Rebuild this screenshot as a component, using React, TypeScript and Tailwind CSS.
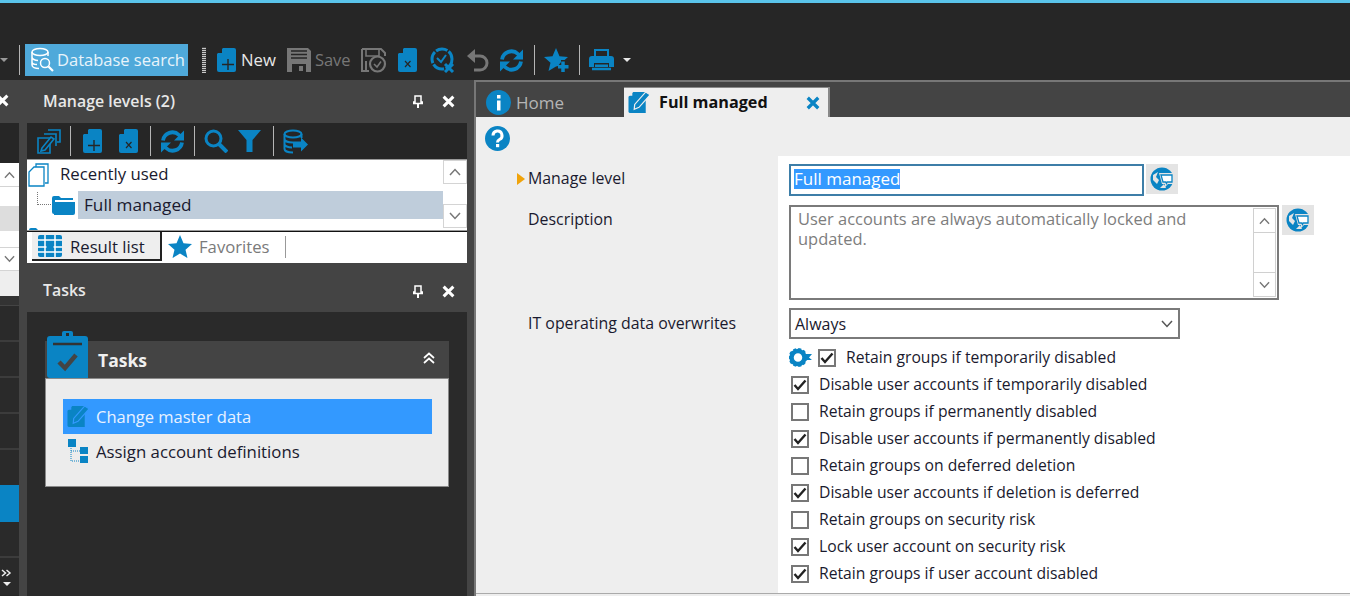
import React from "react";

const B = "#0a84c4";

function Ic({ w, h, vb, className, children }: { w: number; h: number; vb?: string; className?: string; children: React.ReactNode }) {
  return (
    <svg width={w} height={h} viewBox={vb ?? `0 0 ${w} ${h}`} className={`shrink-0 ${className ?? ""}`}>
      {children}
    </svg>
  );
}

function DocPlus({ x = false, className }: { x?: boolean; className?: string }) {
  return (
    <Ic w={19} h={24} className={className}>
      <path d="M6 0H17a2 2 0 0 1 2 2V22a2 2 0 0 1-2 2H2a2 2 0 0 1-2-2V6Z" fill={B} />
      <path d="M5 0V5H0Z" fill="#262626" />
      {x ? (
        <path d="M7 13L12.500 19M12.500 13L7 19" stroke="#262626" strokeWidth="1.200" />
      ) : (
        <path d="M11 11V22M5 16.500H17" stroke="#262626" strokeWidth="1.400" />
      )}
    </Ic>
  );
}

function Sync({ color = B }: { color?: string }) {
  return (
    <Ic w={25} h={25} vb="0 0 25 25">
      <path d="M3 11.500A9.500 9.500 0 0 1 19 6L21.500 8.500" fill="none" stroke={color} strokeWidth="3.800" />
      <path d="M24 1.500V11.500H14Z" fill={color} />
      <path d="M22 13.500A9.500 9.500 0 0 1 6 19L3.500 16.500" fill="none" stroke={color} strokeWidth="3.800" />
      <path d="M1 23.500V13.500H11Z" fill={color} />
    </Ic>
  );
}

function DbGlass({ className }: { className?: string }) {
  return (
    <Ic w={24} h={26} className={className}>
      <g fill="none" stroke="#fff" strokeWidth="1.500">
        <ellipse cx="10" cy="5" rx="8" ry="3.500" />
        <path d="M2 5V18C2 20 5 21.500 9 21.500M18 5V9M2 10C2 12 5 13.500 8 13.500M2 15C2 16.500 4 17.500 7 17.500" />
        <circle cx="15" cy="16" r="4.500" />
        <path d="M18.500 19.500L23 24" strokeWidth="2.200" />
      </g>
    </Ic>
  );
}

function Floppy() {
  return (
    <Ic w={24} h={24}>
      <path d="M0 0H21L24 3V24H0Z" fill="#777" />
      <path d="M4 3H20M4 6.500H20M4 10H20" stroke="#262626" strokeWidth="1.300" />
      <rect x="5" y="16" width="14" height="8" fill="#262626" />
      <rect x="12" y="18" width="4" height="5" fill="#777" />
    </Ic>
  );
}

function SaveClock() {
  return (
    <Ic w={26} h={26}>
      <path d="M1 2H20L24 6V9M1 2V24H8" fill="none" stroke="#777" strokeWidth="2" />
      <path d="M5 3V9H18V3" fill="none" stroke="#777" strokeWidth="1.600" />
      <path d="M5 14V23" stroke="#777" strokeWidth="2" />
      <circle cx="16.500" cy="17" r="7.500" fill="none" stroke="#777" strokeWidth="2.200" />
      <path d="M13 17L16 20L20 14.500" fill="none" stroke="#777" strokeWidth="1.600" />
    </Ic>
  );
}

function ClockX() {
  return (
    <Ic w={26} h={26}>
      <circle cx="12" cy="12" r="10" fill="none" stroke={B} strokeWidth="3" strokeDasharray="12 1.500" />
      <path d="M7 11L11 15L16 8" fill="none" stroke={B} strokeWidth="2" />
      <path d="M15 17L23 25M23 17L15 25" stroke={B} strokeWidth="3" />
    </Ic>
  );
}

function Undo() {
  return (
    <Ic w={23} h={24}>
      <path d="M5 8H14A7 7 0 0 1 14 22H8" fill="none" stroke="#777" strokeWidth="3" />
      <path d="M9 1V15L1 8Z" fill="#777" />
    </Ic>
  );
}

function Star({ plus = false }: { plus?: boolean }) {
  return (
    <Ic w={25} h={24}>
      <path d="M12 0L15.500 8.200L24 9L17.500 14.700L19.500 23L12 18.600L4.500 23L6.500 14.700L0 9L8.500 8.200Z" fill={B} />
      {plus && <rect x="12" y="12" width="13" height="12" fill="#262626" />}
      {plus && <path d="M12 12H17V14L14 18L12 18.600Z" fill={B} />}
      {plus && <path d="M19 13.500V24M14 18.700H24.500" stroke={B} strokeWidth="3.500" />}
    </Ic>
  );
}

function Printer() {
  return (
    <Ic w={25} h={24}>
      <path d="M6 9V2H19V9" fill="none" stroke={B} strokeWidth="2" />
      <path d="M3 8H22A3 3 0 0 1 25 11V19H20V15H5V19H0V11A3 3 0 0 1 3 8Z" fill={B} />
      <path d="M3 21H22" stroke={B} strokeWidth="2.500" />
      <rect x="6" y="16.500" width="13" height="2.500" fill={B} />
    </Ic>
  );
}

function EditCopy() {
  return (
    <Ic w={24} h={25}>
      <g fill="none" stroke={B} strokeWidth="1.600">
        <path d="M11 1H23V13H20M7 5H19V17" />
        <path d="M1 9H13V24H1Z" />
        <path d="M5 19L14 8L17 10L8 21L4 22Z" fill="#262626" />
      </g>
    </Ic>
  );
}

function Search() {
  return (
    <Ic w={24} h={24}>
      <circle cx="9.500" cy="9.500" r="7.500" fill="none" stroke={B} strokeWidth="3" />
      <path d="M15 15L23 23" stroke={B} strokeWidth="4" />
    </Ic>
  );
}

function Funnel() {
  return (
    <Ic w={23} h={22}>
      <path d="M0 0H23L14.500 10V22H8.500V10Z" fill={B} />
    </Ic>
  );
}

function DbExport() {
  return (
    <Ic w={25} h={25}>
      <g fill="none" stroke={B} strokeWidth="2">
        <ellipse cx="10" cy="5" rx="8.500" ry="3.500" />
        <path d="M1.500 5V20C1.500 22 5 23.500 10 23.500M18.500 5V9M1.500 10C1.500 12 5 13.500 10 13.500M1.500 15C1.500 17 5 18.500 9 18.500" />
      </g>
      <path d="M10 12.500H18V8.500L25 15.500L18 22.500V18.500H10Z" fill={B} />
    </Ic>
  );
}

function Pin() {
  return (
    <Ic w={10} h={13}>
      <path d="M2 1H8V7H10V8.500H0V7H2Z" fill="none" stroke="#fff" strokeWidth="1.500" />
      <path d="M5 8V13" stroke="#fff" strokeWidth="2" />
    </Ic>
  );
}

function XIcon({ color = "#fff", size = 13 }: { color?: string; size?: number }) {
  return (
    <Ic w={size} h={size} vb="0 0 12 12">
      <path d="M1.500 1.500L10.500 10.500M10.500 1.500L1.500 10.500" stroke={color} strokeWidth="2.800" />
    </Ic>
  );
}

function Chevron({ up = false, color = "#777", w = 12 }: { up?: boolean; color?: string; w?: number }) {
  return (
    <Ic w={w} h={8} vb="0 0 12 8">
      <path d={up ? "M1 7L6 1.500L11 7" : "M1 1L6 6.500L11 1"} fill="none" stroke={color} strokeWidth="1.500" />
    </Ic>
  );
}

function Globe() {
  return (
    <Ic w={24} h={24}>
      <circle cx="12" cy="12" r="11.500" fill={B} />
      <path d="M3 8L8 5L6 10L9 13L7 17L3 13ZM10 21L14 17L16 21Z" fill="#e4e4e4" />
      <path d="M9 6H24V17H18L15 20V17H12Z" fill="#e4e4e4" />
      <path d="M11 8H22V15H17L16.500 16.500L15.500 15H13Z" fill="#fff" stroke={B} strokeWidth="1.300" />
    </Ic>
  );
}

function GlobeBtn({ className }: { className?: string }) {
  return (
    <div className={`flex h-[30px] w-[32px] items-center justify-center bg-[#e4e4e4] ${className ?? ""}`}>
      <Globe />
    </div>
  );
}

function Folder({ className }: { className?: string }) {
  return (
    <Ic w={24} h={20} className={className}>
      <path d="M1 3A2 2 0 0 1 3 1H8L10 3H22V5H4V19H3A2 2 0 0 1 1 17Z" fill={B} />
      <path d="M3 7H24V18A2 2 0 0 1 22 20H3Z" fill={B} />
    </Ic>
  );
}

function EditDoc({ s = 23, bg = "#eeeeee" }: { s?: number; bg?: string }) {
  return (
    <Ic w={s} h={s} vb="0 0 23 24">
      <path d="M5 1H18V23H2A2 2 0 0 1 0 21V6Z" fill={B} />
      <path d="M4 1V5H0Z" fill={bg} />
      <path d="M6 19L6.500 14L18 1L22.500 4L11 17Z" fill={B} stroke={bg} strokeWidth="1.300" />
    </Ic>
  );
}

function Sep({ className }: { className?: string }) {
  return <div className={`h-[30px] w-px shrink-0 bg-[#b5b5b5] ${className ?? ""}`} />;
}

function MainPanelHeader({ title, h, extra }: { title: string; h: string; extra?: string }) {
  return (
    <div className={`flex items-center justify-between bg-[#444444] pr-[12px] pl-[16px] text-[#e8e8e8] ${h} ${extra ?? ""}`}>
      <span className="text-[15.900px] font-semibold">{title}</span>
      <div className="flex items-center gap-[19px]">
        <Pin />
        <XIcon />
      </div>
    </div>
  );
}

function ScrollBtn({ up, h }: { up: boolean; h: string }) {
  return (
    <div className={`flex items-center justify-center border border-[#d4d4d4] bg-white ${h}`}>
      <Chevron up={up} color="#777" />
    </div>
  );
}

function Check({ on }: { on: boolean }) {
  return (
    <div className="flex h-[18px] w-[18px] shrink-0 items-center justify-center border-2 border-[#777777] bg-white">
      {on && (
        <Ic w={14} h={12}>
          <path d="M1.500 6L5 10L12.500 1.500" fill="none" stroke="#222" strokeWidth="2.400" />
        </Ic>
      )}
    </div>
  );
}

const checks: [string, boolean][] = [
  ["Disable user accounts if temporarily disabled", true],
  ["Retain groups if permanently disabled", false],
  ["Disable user accounts if permanently disabled", true],
  ["Retain groups on deferred deletion", false],
  ["Disable user accounts if deletion is deferred", true],
  ["Retain groups on security risk", false],
  ["Lock user account on security risk", true],
  ["Retain groups if user account disabled", true],
];

function Toolbar() {
  return (
    <div className="flex h-[32px] items-center">
      <div className="h-0 w-0 border-x-[4px] border-t-[4px] border-x-transparent border-t-[#999]" />
      <Sep className="ml-[11px]" />
      <div className="ml-[5px] flex h-[32px] w-[163px] items-center bg-[#4fa9da] pl-[5px] text-[#e8f4fb]">
        <DbGlass />
        <span className="ml-[3px] text-[16.500px]">Database search</span>
      </div>
      <div className="ml-[14px] h-[26px] w-[4px] shrink-0 bg-[repeating-linear-gradient(0deg,#c8c8c8_0,#c8c8c8_1px,#444_1px,#444_2px)]" />
      <DocPlus className="ml-[11px]" />
      <span className="ml-[5px] text-[16.700px] text-[#e8e8e8]">New</span>
      <div className="ml-[11px]"><Floppy /></div>
      <span className="ml-[4px] text-[16.500px] text-[#777]">Save</span>
      <div className="ml-[10px]"><SaveClock /></div>
      <DocPlus x className="ml-[11px]" />
      <div className="ml-[13px]"><ClockX /></div>
      <div className="ml-[10px]"><Undo /></div>
      <div className="ml-[10px]"><Sync /></div>
      <Sep className="ml-[10px]" />
      <div className="ml-[9px]"><Star plus /></div>
      <Sep className="ml-[10px]" />
      <div className="ml-[9px]"><Printer /></div>
      <div className="ml-[9px] h-0 w-0 border-x-[4px] border-t-[4px] border-x-transparent border-t-[#e8e8e8]" />
    </div>
  );
}

function LeftStrip() {
  return (
    <div className="flex w-[19px] shrink-0 flex-col">
      <div className="flex h-[43px] items-center bg-[#444444] pb-[3px]">
        <div className="-ml-[4px]"><XIcon /></div>
      </div>
      <div className="h-[40px] bg-[#262626]" />
      <div className="flex h-[24px] items-center justify-center border-b border-[#d4d4d4] bg-white"><Chevron up w={11} /></div>
      <div className="h-[19px] bg-white" />
      <div className="h-[25px] bg-[#dddddd]" />
      <div className="h-[16px] bg-white" />
      <div className="flex h-[24px] items-center justify-center border-y border-[#d4d4d4] bg-white"><Chevron w={11} /></div>
      <div className="h-[25px] bg-[#eeeeee]" />
      <div className="h-[9px] bg-[#333333]" />
      <div className="h-[1px] bg-[#444444]" />
      <div className="h-[36px] border-b-2 border-[#3c3c3c] bg-[#2a2a2a]" />
      {[0, 1, 2].map((i) => (
        <div key={i} className="h-[36px] border-b-2 border-[#3c3c3c] bg-[#2a2a2a]" />
      ))}
      <div className="h-[35px] bg-[#2a2a2a]" />
      <div className="h-[37px] bg-[#0a84c4]" />
      <div className="h-[36px] border-b-2 border-[#3c3c3c] bg-[#2a2a2a]" />
      <div className="flex h-[37px] flex-col items-start justify-center gap-[5px] bg-[#2a2a2a] pt-[1px] pl-[1px]">
        <Ic w={11} h={8}>
          <path d="M1 1L4.500 4L1 7M5.500 1L9 4L5.500 7" fill="none" stroke="#eee" strokeWidth="1.500" />
        </Ic>
        <div className="ml-[2px] h-0 w-0 border-x-[4px] border-t-[4px] border-x-transparent border-t-[#eee]" />
      </div>
    </div>
  );
}

function ManagePanel() {
  return (
    <div className="flex h-[516px] w-[440px] shrink-0 flex-col bg-[#2a2a2a]">
      <MainPanelHeader title="Manage levels (2)" h="h-[43px]" />
      <div className="flex h-[36px] items-center bg-[#262626] pl-[10px]">
        <EditCopy />
        <Sep className="ml-[9px]" />
        <DocPlus className="ml-[12px]" />
        <DocPlus x className="ml-[17px]" />
        <Sep className="ml-[12px]" />
        <div className="ml-[9px]"><Sync /></div>
        <Sep className="ml-[9px]" />
        <div className="ml-[9px]"><Search /></div>
        <div className="ml-[10px]"><Funnel /></div>
        <Sep className="ml-[12px]" />
        <div className="ml-[9px]"><DbExport /></div>
      </div>
      <div className="flex h-[72px] overflow-hidden border-y border-[#9a9a9a] bg-white">
        <div className="h-[120px] min-w-0 flex-1 text-[#1a1a2e]">
          <div className="flex h-[30px] items-center pl-[1px]">
            <Ic w={22} h={24}>
              <g fill="none" stroke={B} strokeWidth="1.300">
                <path d="M8 4V1H20V20H17" />
                <path d="M6 4H16V23H1V9Z" fill="#fff" />
              </g>
            </Ic>
            <span className="mb-[2px] ml-[10px] text-[16.800px]">Recently used</span>
          </div>
          <div className="flex h-[29px] items-center pl-[10px]">
            <div className="mb-[12px] h-[13px] w-[14px] border-b border-l border-dotted border-[#777]" />
            <Folder />
            <div className="ml-[3px] flex h-[28px] flex-1 items-center bg-[#bfcddb] pt-[1px] pl-[6px] text-[17.200px]">Full managed</div>
          </div>
          <div className="flex h-[30px] pt-[8px]">
            <Folder className="ml-[1px]" />
          </div>
        </div>
        <div className="flex w-[24px] shrink-0 flex-col">
          <ScrollBtn up h="h-[24px]" />
          <div className="h-[20px]" />
          <ScrollBtn up={false} h="h-[24px]" />
        </div>
      </div>
      <div className="flex h-[32px] items-start border-t border-[#111] bg-white pl-[5px] text-[16.700px]">
        <div className="flex h-[29px] w-[130px] items-center border-r-2 border-b-2 border-[#222] bg-[#eeeeee] pl-[6px] text-[#1a1a2e]">
          <Ic w={24} h={22}>
            <rect width="24" height="22" rx="2" fill={B} />
            <path d="M0 5H24M0 12H24M0 17H24M7 0V22M17 0V22" stroke="#fff" strokeWidth="1.500" />
            <rect x="8.500" y="6.500" width="7" height="9" fill={B} />
          </Ic>
          <span className="ml-[8px] pt-[2px]">Result list</span>
        </div>
        <div className="mt-[1px] flex h-[28px] items-center pl-[6px] text-[#7a7a7a]">
          <Star />
          <span className="ml-[6px]">Favorites</span>
          <div className="ml-[15px] h-[22px] w-px bg-[#999]" />
        </div>
      </div>
      <MainPanelHeader title="Tasks" h="h-[49px]" extra="pt-[7px]" />
      <div className="flex-1 bg-[#2a2a2a] px-[18px] pt-[18px]">
        <div className="w-[404px]">
          <div className="flex h-[48px] items-end">
            <div className="flex h-[37px] w-full items-center justify-between bg-[#444444] pr-[14px]">
              <div className="flex items-end self-end">
                <div className="-mt-[11px] ml-[2px] h-[48px]">
                  <Ic w={41} h={48}>
                    <path d="M15 7V3A2 2 0 0 1 17 1H24A2 2 0 0 1 26 3V7Z" fill={B} />
                    <rect x="19" y="3" width="3" height="3" fill="#2a2a2a" />
                    <path d="M3 6H38A3 3 0 0 1 41 9V48H3A3 3 0 0 1 0 45V9A3 3 0 0 1 3 6Z" fill={B} />
                    <path d="M6 14H35" stroke="#333" strokeWidth="2.500" />
                    <path d="M12 32L18 38L29 25" fill="none" stroke="#444" strokeWidth="4.500" />
                  </Ic>
                </div>
                <span className="mb-[5px] ml-[10px] text-[17.500px] font-bold text-[#f0f0f0]">Tasks</span>
              </div>
              <div className="mb-[4px]">
                <Ic w={12} h={12}>
                  <path d="M1 6L6 1.500L11 6M1 11L6 6.500L11 11" fill="none" stroke="#fff" strokeWidth="1.700" />
                </Ic>
              </div>
            </div>
          </div>
          <div className="h-[109px] border border-[#8a8a8a] bg-[#ececec] px-[17px] pt-[20px]">
            <div className="flex h-[35px] w-[369px] items-center bg-[#3399ff] pl-[4px] text-[16.500px] text-[#e8f2ff]">
              <EditDoc s={23} bg="#3399ff" />
              <span className="ml-[6px] pt-[2px]">Change master data</span>
            </div>
            <div className="flex h-[35px] items-center pl-[4px] text-[#1a1a2e]">
              <Ic w={21} h={25}>
                <rect x="1" y="0" width="8" height="8" fill={B} />
                <rect x="13" y="8" width="8" height="7" fill={B} />
                <rect x="13" y="17" width="8" height="7" fill={B} />
                <path d="M4 9V22H13M4 12H13" fill="none" stroke={B} strokeWidth="1" strokeDasharray="1 1" />
              </Ic>
              <span className="ml-[8px] text-[16.800px]">Assign account definitions</span>
            </div>
          </div>
        </div>
      </div>
    </div>
  );
}

function MainArea() {
  return (
    <div className="flex min-w-0 flex-1 flex-col border-t-2 border-l-2 border-[#777777] bg-[#444444]">
      <div className="flex h-[35px] items-end">
        <div className="flex h-[35px] w-[148px] items-center pt-[6px] pl-[10px] text-[17px] text-[#b5b5b5]">
          <Ic w={25} h={25}>
            <circle cx="12.500" cy="12.500" r="12.500" fill={B} />
            <rect x="11" y="5" width="3.500" height="3.500" fill="#fff" />
            <rect x="11" y="10.500" width="3.500" height="10" fill="#fff" />
          </Ic>
          <span className="ml-[5px]">Home</span>
        </div>
        <div className="flex h-[30px] w-[206px] items-center border-t border-r-2 border-[#888888] bg-[#eeeeee] pr-[8px] pl-[4px]">
          <EditDoc s={23} />
          <span className="ml-[8px] flex-1 text-[16.200px] font-bold text-[#111]">Full managed</span>
          <XIcon color={B} size={14} />
        </div>
      </div>
      <div className="flex-1 bg-[#eeeeee]">
        <div className="h-[39px] pt-[9px] pl-[9px]">
          <Ic w={25} h={25}>
            <circle cx="12.500" cy="12.500" r="12.500" fill={B} />
            <path d="M8 9.500A4.500 4.500 0 1 1 14.500 13.500C13 14.300 12.500 15 12.500 16.500" fill="none" stroke="#fff" strokeWidth="3" />
            <rect x="11" y="18" width="3.200" height="3.200" fill="#fff" />
          </Ic>
        </div>
        <div className="flex h-[437px]">
          <div className="w-[302px] shrink-0 text-[15.900px] text-[#1a1a2e]">
            <div className="flex items-center pt-[11px] pl-[41px]">
              <div className="h-0 w-0 border-y-[6px] border-l-[8px] border-y-transparent border-l-[#f0a30a]" />
              <span className="ml-[3px]">Manage level</span>
            </div>
            <div className="pt-[17px] pl-[52px]">Description</div>
            <div className="pt-[80px] pl-[52px]">IT operating data overwrites</div>
          </div>
          <div className="flex-1 bg-white pt-[8px] pl-[11px]">
            <div className="flex items-start">
              <div className="flex h-[32px] w-[355px] items-center border-2 border-[#3d7ea8] pb-[2px] pl-[3px] text-[17px]">
                <span className="bg-[#3399ff] leading-[20px] text-white">Full managed</span>
              </div>
              <GlobeBtn className="ml-[2px]" />
            </div>
            <div className="mt-[9px] flex items-start">
              <div className="flex h-[95px] w-[490px] border-2 border-[#7a7a7a] p-[1px] pl-[7px] text-[16.450px] leading-[20px] text-[#7d7d7d]">
                <div className="flex-1 pt-[1px]">User accounts are always automatically locked and<br />updated.</div>
                <div className="flex w-[23px] flex-col border border-[#d0d0d0]">
                  <div className="flex h-[24px] items-center justify-center border-b border-[#d0d0d0]"><Chevron up w={11} /></div>
                  <div className="flex-1" />
                  <div className="flex h-[24px] items-center justify-center border-t border-[#d0d0d0]"><Chevron w={11} /></div>
                </div>
              </div>
              <GlobeBtn className="ml-[3px]" />
            </div>
            <div className="mt-[8px] flex h-[31px] w-[391px] items-center justify-between border-2 border-[#7a7a7a] pt-[1px] pr-[5px] pl-[4px] text-[16px] text-[#1a1a2e]">
              <span>Always</span>
              <Chevron color="#555" />
            </div>
            <div className="mt-[5px] flex h-[27px] items-center text-[15.700px] text-[#1a1a2e]">
              <Ic w={23} h={20}>
                <circle cx="9" cy="9.500" r="6.500" fill="none" stroke={B} strokeWidth="4.500" />
                <circle cx="9" cy="9.500" r="8.500" fill="none" stroke={B} strokeWidth="2" strokeDasharray="3 2" />
                <path d="M14 6H23L20 9.500L23 12H16Z" fill={B} />
              </Ic>
              <div className="ml-[6px]"><Check on /></div>
              <span className="ml-[10px] whitespace-nowrap">Retain groups if temporarily disabled</span>
            </div>
            {checks.map(([t, on]) => (
              <div key={t} className="flex h-[27px] items-center pl-[2px] text-[15.700px] text-[#1a1a2e]">
                <Check on={on} />
                <span className="ml-[10px] whitespace-nowrap">{t}</span>
              </div>
            ))}
          </div>
        </div>
        <div className="h-[1px] bg-[#aaaaaa]" />
      </div>
    </div>
  );
}

export default function App() {
  return (
    <div className="flex h-[596px] w-[1350px] flex-col overflow-hidden bg-[#262626] font-['Open_Sans','Noto_Sans',sans-serif]">
      <div className="h-[3px] shrink-0 bg-[#5ac4ea]" />
      <div className="h-[41px] shrink-0" />
      <Toolbar />
      <div className="h-[4px] shrink-0" />
      <div className="flex min-h-0 flex-1">
        <LeftStrip />
        <div className="w-[8px] shrink-0 bg-[#444444]" />
        <ManagePanel />
        <div className="w-[7px] shrink-0 bg-[#444444]" />
        <MainArea />
      </div>
    </div>
  );
}
